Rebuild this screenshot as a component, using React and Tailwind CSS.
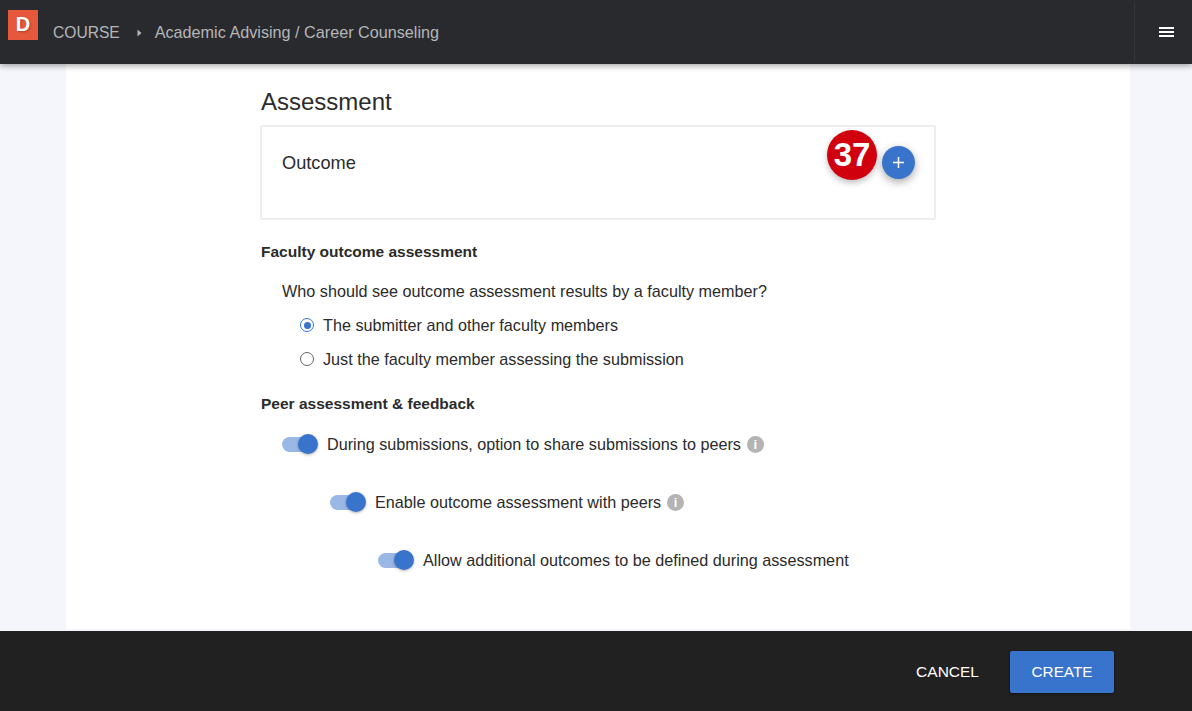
import React from "react";

const font = "font-['Liberation_Sans',Arial,sans-serif]";

const Toggle = () => (
  <span className="relative block w-[37px] h-[22px] shrink-0">
    <span className="absolute left-[1px] top-[3px] w-[35px] h-[15px] rounded-full bg-[#9ab8e6]" />
    <span className="absolute right-0 top-0 w-[20px] h-[20px] rounded-full bg-[#3874cb] shadow-[0_1px_3px_rgba(0,0,0,0.3)]" />
  </span>
);

const Info = () => (
  <span className="flex items-center justify-center w-[17px] h-[17px] rounded-full bg-[#b4b4b4] text-white text-[13px] font-bold leading-none">
    i
  </span>
);

const ToggleRow = ({ className, children, info }) => (
  <div className={`flex items-center h-[22px] ${className}`}>
    <Toggle />
    <span className="ml-[9px] relative -top-px text-[16.2px] text-[#2b2b2b]">{children}</span>
    {info && (
      <span className="ml-[6px] relative -top-px">
        <Info />
      </span>
    )}
  </div>
);

const Radio = ({ checked, children }) => (
  <div className="flex items-center h-[22px] ml-[40px]">
    <span
      className={`flex items-center justify-center w-[14px] h-[14px] rounded-full border-[1.5px] ${
        checked ? "border-[#3874cb]" : "border-[#666]"
      }`}
    >
      {checked && <span className="block w-[7px] h-[7px] rounded-full bg-[#3874cb]" />}
    </span>
    <span className="ml-[9px] text-[16.2px] text-[#2b2b2b]">{children}</span>
  </div>
);

export default function App() {
  return (
    <div className={`${font} flex flex-col h-[711px] overflow-hidden bg-[#f5f6fb]`}>
      {/* top bar */}
      <header className="relative z-10 flex h-[64px] shrink-0 bg-[#292a2e] shadow-[0_2px_6px_rgba(0,0,0,0.35)]">
        <div className="flex items-center justify-center mt-[10px] ml-[8px] pb-[2px] w-[30px] h-[30px] bg-[#e5583c] text-white text-[20px] font-bold leading-none [text-shadow:1px_1px_2px_rgba(0,0,0,0.25)]">
          D
        </div>
        <div className="flex items-center h-full pt-[1px] ml-[15px] text-[#b5b6b8]">
          <span className="text-[15.6px]">COURSE</span>
          <svg className="ml-[17px] w-[5px] h-[8px]" viewBox="0 0 5 8">
            <path d="M0.5 0.5 L4.5 4 L0.5 7.5 Z" fill="#b5b6b8" />
          </svg>
          <span className="ml-[13px] text-[16.2px]">Academic Advising / Career Counseling</span>
        </div>
        <div className="ml-auto flex items-center justify-center w-[58px] h-[60px] my-auto pl-[5px] border-l border-[#323337]">
          <span className="flex flex-col gap-[2px] w-[15px]">
            <span className="block h-[2px] bg-white" />
            <span className="block h-[2px] bg-white" />
            <span className="block h-[2px] bg-white" />
          </span>
        </div>
      </header>

      {/* form */}
      <main className="flex-1 ml-[66px] mr-[62px] bg-white">
        <div className="ml-[194px] w-[676px] pt-[23px]">
          <h1 className="ml-[1px] text-[24px] leading-[30px] text-[#2b2b2b]">Assessment</h1>
          <div className="relative mt-[8px] h-[95px] border-2 border-[#eeeeee] rounded-[2px] pl-[20px] pt-[25px]">
            <span className="block text-[18.2px] leading-[22px] text-[#2b2b2b]">Outcome</span>
            <span className="absolute left-[565px] top-[3px] flex items-center justify-center pb-[2px] w-[50px] h-[50px] rounded-full bg-[#d0000f] text-white text-[33px] font-bold leading-none shadow-[0_3px_6px_rgba(0,0,0,0.25)]">
              37
            </span>
            <span className="absolute left-[620px] top-[19px] flex items-center justify-center w-[33px] h-[33px] rounded-full bg-[#3874cb] shadow-[0_3px_8px_rgba(0,0,0,0.35)]">
              <svg className="w-[13px] h-[13px]" viewBox="0 0 13 13">
                <path d="M6.5 1 V12 M1 6.5 H12" stroke="#fff" strokeWidth="1.5" />
              </svg>
            </span>
          </div>

          <h2 className="mt-[22px] ml-[1px] text-[15.5px] leading-[20px] font-bold text-[#2b2b2b]">Faculty outcome assessment</h2>
          <p className="mt-[18px] ml-[22px] text-[16.2px] leading-[22px] text-[#2b2b2b]">
            Who should see outcome assessment results by a faculty member?
          </p>
          <div className="mt-[12px] flex flex-col gap-[12px]">
            <Radio checked>The submitter and other faculty members</Radio>
            <Radio>Just the faculty member assessing the submission</Radio>
          </div>

          <h2 className="mt-[24px] ml-[1px] text-[15.5px] leading-[20px] font-bold text-[#2b2b2b]">Peer assessment &amp; feedback</h2>
          <div className="mt-[20px] flex flex-col gap-[36px]">
            <ToggleRow className="ml-[21px]" info>
              During submissions, option to share submissions to peers
            </ToggleRow>
            <ToggleRow className="ml-[69px]" info>
              Enable outcome assessment with peers
            </ToggleRow>
            <ToggleRow className="ml-[117px]">Allow additional outcomes to be defined during assessment</ToggleRow>
          </div>
        </div>
      </main>

      {/* actions */}
      <footer className="flex items-center justify-end h-[80px] shrink-0 mt-[2px] bg-[#212121] pr-[78px]">
        <button className="mt-[2px] text-[15.5px] text-white">CANCEL</button>
        <button className="ml-[31px] mt-[2px] w-[104px] h-[42px] rounded-[2px] bg-[#3874cb] text-[15.3px] text-white shadow-[0_1px_3px_rgba(0,0,0,0.5)]">
          CREATE
        </button>
      </footer>
    </div>
  );
}
